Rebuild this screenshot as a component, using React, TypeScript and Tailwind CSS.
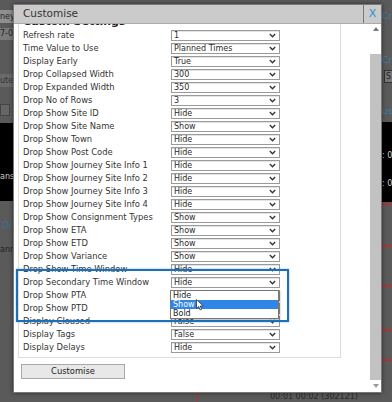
import React from "react";

const rows: [string, string][] = [
  ["Refresh rate", "1"],
  ["Time Value to Use", "Planned Times"],
  ["Display Early", "True"],
  ["Drop Collapsed Width", "300"],
  ["Drop Expanded Width", "350"],
  ["Drop No of Rows", "3"],
  ["Drop Show Site ID", "Hide"],
  ["Drop Show Site Name", "Show"],
  ["Drop Show Town", "Hide"],
  ["Drop Show Post Code", "Hide"],
  ["Drop Show Journey Site Info 1", "Hide"],
  ["Drop Show Journey Site Info 2", "Hide"],
  ["Drop Show Journey Site Info 3", "Hide"],
  ["Drop Show Journey Site Info 4", "Hide"],
  ["Drop Show Consignment Types", "Show"],
  ["Drop Show ETA", "Show"],
  ["Drop Show ETD", "Show"],
  ["Drop Show Variance", "Show"],
  ["Drop Show Time Window", "Hide"],
  ["Drop Secondary Time Window", "Hide"],
  ["Drop Show PTA", "Hide"],
  ["Drop Show PTD", "Hide"],
  ["Display Cloused", "False"],
  ["Display Tags", "False"],
  ["Display Delays", "Hide"],
];

function Chevron() {
  return (
    <svg width="7" height="5" viewBox="0 0 7 5" className="shrink-0">
      <path d="M0.8 1 L3.5 3.8 L6.2 1" fill="none" stroke="#333" strokeWidth="1.3" />
    </svg>
  );
}

function Select({ value }: { value: string }) {
  return (
    <div className="flex h-[11px] w-[109px] items-center justify-between border border-[#9a9a9a] bg-white pl-[2px] pr-[3px] shadow-[inset_0_1px_0_#e4e4e4]">
      <span className="text-[8px] leading-none text-[#2a2a2a]">{value}</span>
      <Chevron />
    </div>
  );
}

export default function App() {
  return (
    <div
      className="relative h-[402px] w-[392px] overflow-hidden bg-[#5a5a5a]"
      style={{ fontFamily: '"DejaVu Sans", Verdana, sans-serif' }}
    >
      {/* page behind the dialog */}
      <div className="absolute left-0 top-[10px] flex h-[13px] w-[14px] items-center bg-[#8f8f8f] text-[8px] text-[#222]">ney</div>
      <div className="absolute left-0 top-[28px] flex h-[12px] w-[14px] items-center bg-[#7a7a7a] text-[8px] text-[#222]">7-0</div>
      <div className="absolute left-0 top-[74px] flex h-[13px] w-[14px] items-center bg-[#6a6a6a] text-[8px] text-[#333]">ute</div>
      <div className="absolute left-0 top-[104px] h-[12px] w-[10px] border border-[#444] bg-[#666]" />
      <div className="absolute left-0 top-[123px] flex h-[78px] w-[14px] items-end bg-black pb-[18px] text-[8px] text-[#ccc]">ansp</div>
      <div className="absolute left-[2px] top-[219px] text-[9px] italic text-[#3a6e99]">Dr</div>
      <div className="absolute left-0 top-[244px] text-[8px] text-[#222]">ann</div>

      <div className="absolute left-[382px] top-[10px] text-[9px] text-[#3a7ca8]">Cr</div>
      <div className="absolute left-[382px] top-[54px] text-[9px] text-[#3a7ca8]">Cr</div>
      <div className="absolute left-[384px] top-[70px] flex h-[13px] w-[12px] items-center border border-[#333] bg-[#777] pl-[1px] text-[8px] text-[#222]">S</div>
      <div className="absolute left-[382px] top-[105px] text-[9px] text-[#3a7ca8]">ust</div>
      <div className="absolute left-[382px] top-[122px] flex h-[80px] w-[12px] flex-col gap-[16px] bg-black pt-[28px] text-[8px] text-[#ccc]">
        <span>: 0</span>
        <span>: 0</span>
      </div>
      {[202, 244, 284, 329, 358].map((y) => (
        <div key={y} className="absolute left-[382px] h-[3px] w-[12px] border-y border-[#a33]" style={{ top: y }} />
      ))}
      <div className="absolute left-[197px] top-[392px] h-[10px] w-[1px] bg-[#a33]" />
      <div className="absolute left-[270px] top-[391px] text-[8px] text-[#2a2a2a]">00:01 00:02 (302121)</div>

      {/* dialog */}
      <div className="absolute left-[13px] top-[4px] flex h-[389px] w-[369px] flex-col border border-[#777] bg-white shadow-[0_0_4px_rgba(0,0,0,0.5)]">
        <div className="relative z-10 flex h-[19px] shrink-0 items-stretch border-b border-[#aaa] bg-[#cbcbcb]">
          <div className="flex flex-1 items-center pl-[9px] text-[10.5px] text-[#333]">Customise</div>
          <div className="flex w-[18px] items-center justify-center border-l border-[#777] text-[11px] text-[#2a8fd0]">X</div>
        </div>

        <div className="flex min-h-0 flex-1">
          <div className="relative flex-1 overflow-hidden pl-[4px]">
            <div className="w-[323px] border border-t-0 border-[#dcdcdc] pb-[4px] pl-[4px]">
              <div className="mt-[-8px] mb-[2px] text-[11px] font-bold leading-[12px] text-[#222]">Custom Settings</div>
              <div className="flex flex-col gap-[2px]">
                {rows.map(([label, value]) => (
                  <div key={label} className="flex h-[11px] items-center">
                    <div className="w-[148px] shrink-0 text-[8.4px] leading-none text-[#333]">{label}</div>
                    <Select value={value} />
                  </div>
                ))}
              </div>
            </div>

            <div className="mt-[6px] ml-[3px] flex h-[15px] w-[104px] items-center justify-center border border-[#a8a8a8] bg-[#e8e8e8] text-[8.4px] text-[#222]">
              Customise
            </div>

            {/* open dropdown */}
            <div className="absolute left-[156px] top-[266px] w-[109px] border border-[#777] bg-white text-[8px] leading-none text-[#222] shadow-[1px_1px_2px_rgba(0,0,0,0.3)]">
              <div className="flex h-[9px] items-center pl-[2px]">Hide</div>
              <div className="flex h-[9px] items-center bg-[#2f86e6] pl-[2px] text-white">Show</div>
              <div className="flex h-[9px] items-center pl-[2px]">Bold</div>
            </div>
            <svg className="absolute left-[182px] top-[275px]" width="8" height="12" viewBox="0 0 8 12">
              <path d="M0.5 0.5 L0.5 9.5 L2.7 7.5 L4.2 11 L5.6 10.4 L4.2 7 L7.2 7 Z" fill="white" stroke="#333" strokeWidth="0.8" />
            </svg>

            {/* annotation box */}
            <div className="absolute left-[2px] top-[245px] h-[53px] w-[273px] border-2 border-[#1c70b8] shadow-[0_0_2px_rgba(28,112,184,0.5)]" />
          </div>

          <div className="flex w-[11px] shrink-0 flex-col items-center bg-white">
            <div className="flex h-[30px] w-full justify-center pt-[3px]">
              <svg width="6" height="4" viewBox="0 0 6 4"><path d="M0 4 L3 0 L6 4 Z" fill="#777" /></svg>
            </div>
            <div className="w-full flex-1 bg-[#c2c2c2]" />
            <div className="flex h-[12px] w-full items-center justify-center">
              <svg width="6" height="4" viewBox="0 0 6 4"><path d="M0 0 L3 4 L6 0 Z" fill="#999" /></svg>
            </div>
          </div>
        </div>
      </div>
    </div>
  );
}
